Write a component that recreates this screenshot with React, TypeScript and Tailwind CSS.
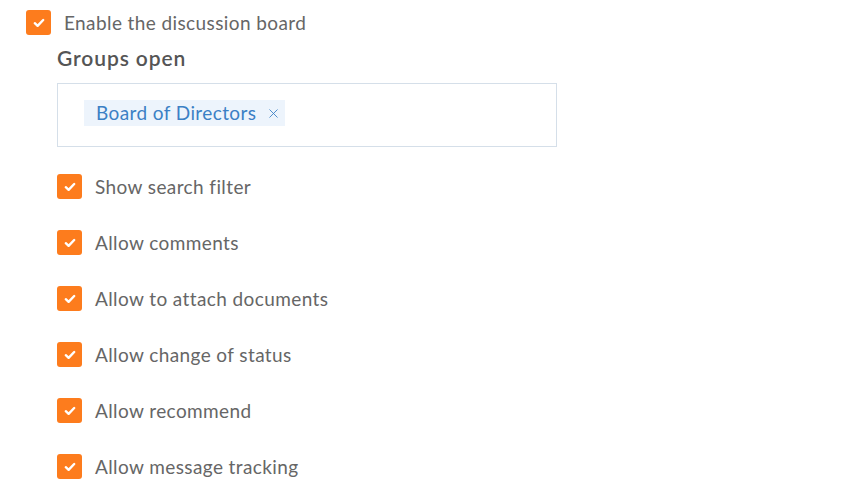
import { X } from 'lucide-react';

function CheckBox() {
  return (
    <span className="flex h-[25px] w-[25px] shrink-0 items-center justify-center rounded-[3px] bg-[#fd7c1d]">
      <svg width="12" height="10" viewBox="0 0 12 10" fill="none">
        <path d="M1.8 5.2 L4.6 7.8 L10.2 2" stroke="white" strokeWidth="2.4" strokeLinecap="round" strokeLinejoin="round" />
      </svg>
    </span>
  );
}

const options = [
  'Show search filter',
  'Allow comments',
  'Allow to attach documents',
  'Allow change of status',
  'Allow recommend',
  'Allow message tracking',
];

export default function App() {
  return (
    <div className="min-h-screen bg-white pl-[26px] pt-[10px] font-['Lato','Open_Sans',sans-serif] text-[19px] tracking-[0.4px] text-[#666666]">
      <label className="flex items-center gap-[13px]">
        <CheckBox />
        <span className="leading-[25px]">Enable the discussion board</span>
      </label>

      <div className="ml-[31px]">
        <h3 className="mt-[10px] text-[21px] font-semibold leading-[26px] tracking-[0.9px] text-[#555555]">Groups open</h3>
        <div className="mt-[12px] flex h-[64px] w-[500px] items-start border border-[#d5dfe9] pl-[26px] pt-[16px]">
          <span className="flex h-[26px] items-center gap-[10px] bg-[#edf4fc] pl-[12px] pr-[4px] text-[#3b80c5]">
            <span className="leading-[26px]">Board of Directors</span>
            <X size={15} strokeWidth={1.4} />
          </span>
        </div>

        <div className="mt-[27px] flex flex-col gap-[31px]">
          {options.map((o) => (
            <label key={o} className="flex items-center gap-[13px]">
              <CheckBox />
              <span className="leading-[25px]">{o}</span>
            </label>
          ))}
        </div>
      </div>
    </div>
  );
}
